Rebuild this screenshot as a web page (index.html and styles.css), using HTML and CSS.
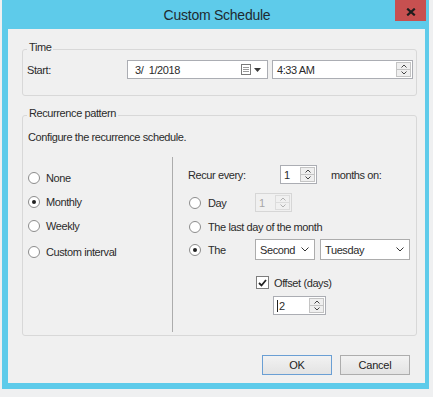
FILE: index.html
```html
<!DOCTYPE html>
<html>
<head>
  <title>Custom Schedule</title>
  <link rel="stylesheet" href="styles.css">
</head>
<body>
<div class="window">
  <div class="titlebar">
    <span class="title">Custom Schedule</span>
    <div class="close">
      <svg width="10" height="8" viewBox="0 0 10 8"><path d="M1.2 0.6 L8.8 7.4 M8.8 0.6 L1.2 7.4" stroke="#1d1d1d" stroke-width="2.1"/></svg>
    </div>
  </div>

  <div class="client">
    <!-- Time -->
    <div class="group time-group">
      <span class="group-title">Time</span>
      <div class="time-row">
        <span class="start-label">Start:</span>
        <div class="field date-field">
          <span class="field-text">3/  1/2018</span>
          <svg class="cal" width="10" height="11" viewBox="0 0 10 11">
            <rect x="0.5" y="0.5" width="9" height="10" fill="#fff" stroke="#7a7a7a"/>
            <path d="M2 3.5 H8 M2 5.5 H8 M2 7.5 H8" stroke="#9a9a9a"/>
          </svg>
          <svg class="drop" width="7" height="4" viewBox="0 0 7 4"><path d="M0 0 H7 L3.5 4 Z" fill="#3a3a3a"/></svg>
        </div>
        <div class="field time-field">
          <span class="field-text">4:33 AM</span>
          <div class="spin-btns">
            <span class="spin-btn"><svg width="6" height="4" viewBox="0 0 6 4"><path d="M0.5 3.5 L3 1 L5.5 3.5" fill="none" stroke="#444"/></svg></span>
            <span class="spin-btn"><svg width="6" height="4" viewBox="0 0 6 4"><path d="M0.5 0.5 L3 3 L5.5 0.5" fill="none" stroke="#444"/></svg></span>
          </div>
        </div>
      </div>
    </div>

    <!-- Recurrence pattern -->
    <div class="group recur-group">
      <span class="group-title">Recurrence pattern</span>
      <div class="hint">Configure the recurrence schedule.</div>
      <div class="columns">
        <div class="kinds">
          <div class="kind"><span class="radio"></span>None</div>
          <div class="kind"><span class="radio on"></span>Monthly</div>
          <div class="kind"><span class="radio"></span>Weekly</div>
          <div class="kind last"><span class="radio"></span>Custom interval</div>
        </div>
        <div class="monthly">
          <div class="m-row every-row">
            <span class="every-label">Recur every:</span>
            <div class="field spin num-spin">
              <span class="field-text">1</span>
              <div class="spin-btns">
                <span class="spin-btn"><svg width="6" height="4" viewBox="0 0 6 4"><path d="M0.5 3.5 L3 1 L5.5 3.5" fill="none" stroke="#444"/></svg></span>
                <span class="spin-btn"><svg width="6" height="4" viewBox="0 0 6 4"><path d="M0.5 0.5 L3 3 L5.5 0.5" fill="none" stroke="#444"/></svg></span>
              </div>
            </div>
            <span class="months-on">months on:</span>
          </div>
          <div class="m-row day-row">
            <span class="opt"><span class="radio"></span>Day</span>
            <div class="field spin num-spin disabled">
              <span class="field-text">1</span>
              <div class="spin-btns">
                <span class="spin-btn"><svg width="6" height="4" viewBox="0 0 6 4"><path d="M0.5 3.5 L3 1 L5.5 3.5" fill="none" stroke="#b0b0b0"/></svg></span>
                <span class="spin-btn"><svg width="6" height="4" viewBox="0 0 6 4"><path d="M0.5 0.5 L3 3 L5.5 0.5" fill="none" stroke="#b0b0b0"/></svg></span>
              </div>
            </div>
          </div>
          <div class="m-row last-row">
            <span class="opt"><span class="radio"></span>The last day of the month</span>
          </div>
          <div class="m-row the-row">
            <span class="opt"><span class="radio on"></span>The</span>
            <div class="select week-select">
              <span>Second</span>
              <svg width="8" height="5" viewBox="0 0 8 5"><path d="M0.5 0.5 L4 4 L7.5 0.5" fill="none" stroke="#333"/></svg>
            </div>
            <div class="select day-select">
              <span>Tuesday</span>
              <svg width="8" height="5" viewBox="0 0 8 5"><path d="M0.5 0.5 L4 4 L7.5 0.5" fill="none" stroke="#333"/></svg>
            </div>
          </div>
          <div class="m-row offset-row">
            <span class="check">
              <svg width="9" height="8" viewBox="0 0 9 8"><path d="M1 4 L3.5 6.5 L8 1" fill="none" stroke="#222" stroke-width="1.8"/></svg>
            </span>
            Offset (days)
          </div>
          <div class="m-row offset-spin-row">
            <div class="field spin offset-spin">
              <span class="field-text"><span class="caret"></span>2</span>
              <div class="spin-btns">
                <span class="spin-btn"><svg width="6" height="4" viewBox="0 0 6 4"><path d="M0.5 3.5 L3 1 L5.5 3.5" fill="none" stroke="#444"/></svg></span>
                <span class="spin-btn"><svg width="6" height="4" viewBox="0 0 6 4"><path d="M0.5 0.5 L3 3 L5.5 0.5" fill="none" stroke="#444"/></svg></span>
              </div>
            </div>
          </div>
        </div>
      </div>
    </div>

    <div class="buttons">
      <button class="btn default" type="button">OK</button>
      <button class="btn" type="button">Cancel</button>
    </div>
  </div>
</div>
</body>
</html>
```

FILE: styles.css
```css
body {
  margin: 0;
  background-color: #eff0f1;
  font-family: "Liberation Sans", Arial, sans-serif;
  font-size: 11px;
  letter-spacing: -0.4px;
  color: #2b2b2b;
}

.window {
  margin-left: 2px;
  width: 427px;
  height: 389px;
  box-sizing: border-box;
  padding: 0 4px 6px 6px;
  background-color: #5ecbea;
  display: flex;
  flex-direction: column;
}

.titlebar {
  height: 29px;
  margin-right: -1px;
  display: grid;
  grid-template-columns: 1fr auto 1fr;
}

.title {
  grid-column: 2;
  font-size: 14px;
  letter-spacing: -0.25px;
  color: #1f2a30;
  line-height: 30px;
}

.close {
  grid-column: 3;
  justify-self: end;
  width: 31px;
  height: 21px;
  background-color: #c75050;
  display: flex;
  justify-content: center;
  align-items: center;
  padding-top: 2px;
  box-sizing: border-box;
}

.client {
  flex: 1;
  background-color: #f0f0f0;
  padding: 20px 8px 0 14px;
}

/* group boxes */
.group {
  border: 1px solid #d8d8d8;
  border-radius: 3px;
}

.group-title {
  display: table;
  margin: -9px 0 0 4px;
  padding: 0 2px;
  line-height: 13px;
  background-color: #f0f0f0;
}

.time-row {
  display: flex;
  align-items: center;
  gap: 4px;
  margin-top: 6px;
  padding: 0 3px 16px 4px;
}

.start-label {
  flex: 1;
}

.field {
  height: 19px;
  box-sizing: border-box;
  border: 1px solid #abadb3;
  background-color: #ffffff;
  display: flex;
  align-items: center;
}

.field-text {
  flex: 1;
  white-space: pre;
  display: flex;
  align-items: center;
}

.date-field,
.time-field {
  width: 141px;
}

.date-field .field-text {
  padding-left: 7px;
}

.time-field .field-text {
  padding-left: 4px;
}

.cal {
  margin-right: 3px;
}

.drop {
  margin-right: 6px;
}

.spin-btns {
  width: 15px;
  height: 15px;
  margin-right: 1px;
  display: flex;
  flex-direction: column;
}

.spin-btn {
  flex: 1;
  border: 1px solid #c4c4c4;
  background-color: #efefef;
  display: flex;
  justify-content: center;
  align-items: center;
}

.spin-btn + .spin-btn {
  margin-top: -1px;
}

.recur-group {
  margin-top: 19px;
  padding-bottom: 3px;
}

.hint {
  margin-top: 11px;
  padding-left: 5px;
  line-height: 13px;
}

.columns {
  display: flex;
  margin-top: 13px;
  height: 175px;
}

/* left column */
.kinds {
  width: 149px;
  padding: 9px 0 0 5px;
  box-sizing: border-box;
}

.kind {
  height: 24px;
  display: flex;
  align-items: center;
  gap: 6px;
}

.kind.last {
  margin-top: 2px;
}

.radio {
  flex-shrink: 0;
  width: 12px;
  height: 12px;
  box-sizing: border-box;
  border: 1px solid #8c8c8c;
  border-radius: 50%;
  background-color: #ffffff;
  display: flex;
  justify-content: center;
  align-items: center;
}

.radio.on::after {
  content: '';
  width: 4px;
  height: 4px;
  border-radius: 50%;
  background-color: #222;
}

/* right column */
.monthly {
  flex: 1;
  border-left: 1px solid #acacac;
  padding-left: 16px;
}

.m-row {
  display: flex;
  align-items: center;
  height: 19px;
}

.every-row {
  margin-top: 8px;
}

.every-label {
  width: 92px;
  margin-left: -1px;
}

.num-spin {
  width: 37px;
}

.num-spin .field-text,
.offset-spin .field-text {
  padding-left: 3px;
}

.months-on {
  margin-left: 14px;
}

.day-row {
  margin-top: 9px;
}

.opt {
  flex-shrink: 0;
  width: 66px;
  display: flex;
  align-items: center;
  gap: 7px;
  white-space: nowrap;
}

.last-row .opt {
  width: auto;
}

.disabled {
  border-color: #d6d6d6;
  background-color: #f0f0f0;
  color: #a6a6a6;
}

.disabled .spin-btn {
  border-color: #dcdcdc;
  background-color: #f0f0f0;
}

.last-row {
  margin-top: 5px;
}

.the-row {
  margin-top: 3px;
  height: 21px;
}

.select {
  height: 21px;
  box-sizing: border-box;
  border: 1px solid #acacac;
  background-color: #ffffff;
  display: flex;
  align-items: center;
  justify-content: space-between;
  padding: 0 5px 0 4px;
}

.week-select {
  width: 60px;
}

.day-select {
  width: 90px;
  margin-left: 5px;
}

.offset-row {
  margin-top: 13px;
  padding-left: 67px;
  gap: 5px;
}

.check {
  width: 13px;
  height: 13px;
  box-sizing: border-box;
  border: 1px solid #7d7d7d;
  background-color: #ffffff;
  display: flex;
  justify-content: center;
  align-items: center;
}

.offset-spin-row {
  margin-top: 4px;
  padding-left: 84px;
}

.offset-spin {
  width: 53px;
}

.caret {
  width: 1px;
  height: 12px;
  margin-right: 1px;
  background-color: #222;
}

/* dialog buttons */
.buttons {
  display: flex;
  justify-content: flex-end;
  gap: 8px;
  margin-top: 19px;
  padding-right: 7px;
}

.btn {
  width: 70px;
  height: 20px;
  padding: 0;
  border: 1px solid #adadad;
  background: linear-gradient(#f2f2f2, #e3e3e3);
  font-family: inherit;
  font-size: 11px;
  letter-spacing: -0.2px;
  color: #222;
}

.btn.default {
  border-color: #6a9fd4;
}
```
